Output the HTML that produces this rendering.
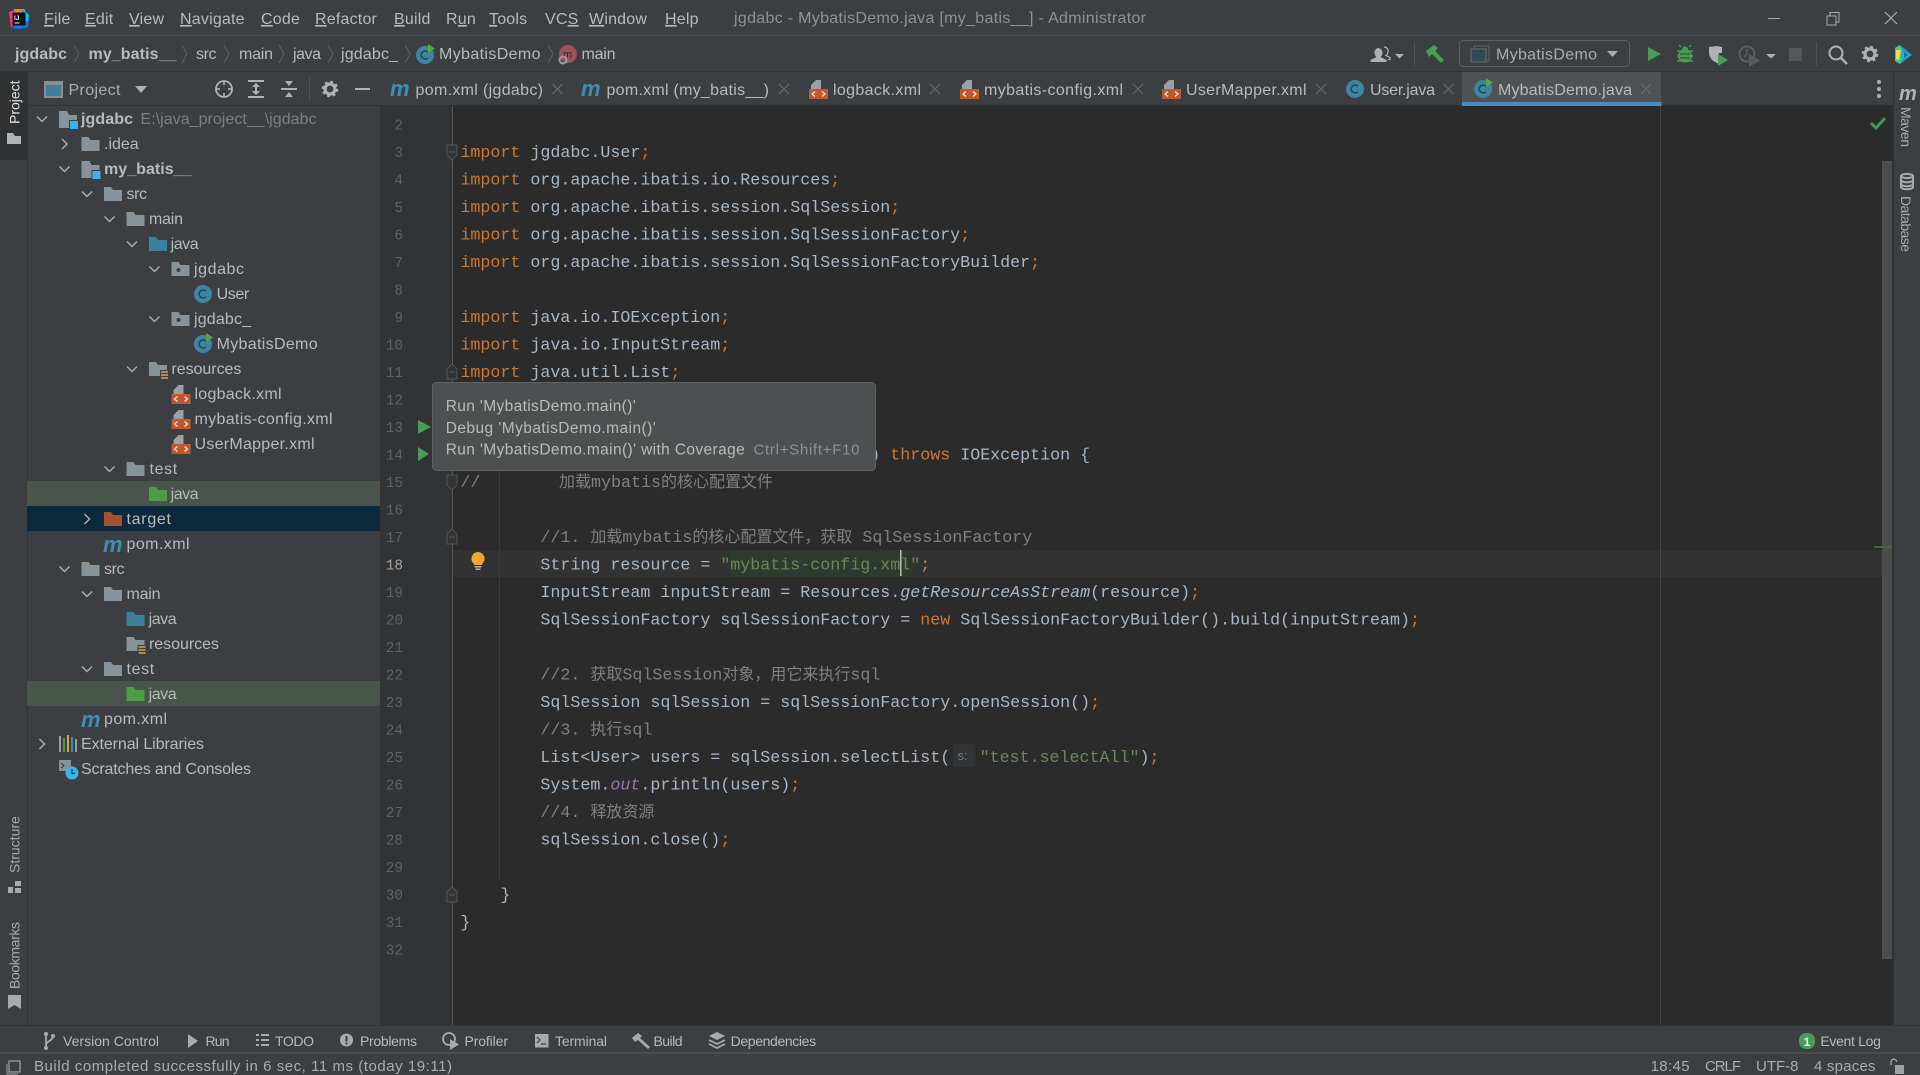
<!DOCTYPE html>
<html lang="en"><head><meta charset="utf-8"><title>jgdabc - MybatisDemo.java</title>
<style>
html,body{margin:0;padding:0;background:#3c3f41;width:1920px;height:1075px;overflow:hidden}
svg{display:block}
text{font-family:"Liberation Sans","Noto Sans CJK SC",sans-serif;white-space:pre}
.ui{font-size:16px;fill:#b8babc}
.b{font-weight:700;fill:#b8babc}
.m{font-size:16px;fill:#b8babc;letter-spacing:.2px}
.t{font-size:16px;fill:#b8babc}
.sm{font-size:14px;fill:#b8babc}
.st{font-size:15px;fill:#a9adb0}
.v{font-size:14px;fill:#a8acae}
.code text,text.code{font-family:"Liberation Mono","Noto Sans CJK SC",monospace;font-size:16.67px;fill:#a9b7c6}
.ln text{font-family:"Liberation Mono",monospace;font-size:14.4px;fill:#606366;text-anchor:end}
.k{fill:#cc7832}
.s{fill:#6a8759}
.c{fill:#808080}
.cj{font-family:"Noto Sans CJK SC",sans-serif;font-size:16px}
.i{font-style:italic}
.p{fill:#9876aa}
</style></head><body>
<svg xmlns="http://www.w3.org/2000/svg" width="1920" height="1075" viewBox="0 0 1920 1075">
<defs>
<path id="f" d="M0 0H7L9 3H18V14H0Z"/>
<g id="mod"><path d="M0 0H8L10 4H18V17H0Z" fill="#87939a"/><rect x="10" y="9" width="10" height="10" fill="#3c3f41"/><rect x="11" y="10" width="8" height="8" fill="#3bb5e8"/></g>
<g id="pkg"><path d="M0 0H7L9 3H18V14H0Z" fill="#87939a"/><circle cx="7" cy="8" r="2" fill="#3c3f41"/></g>
<g id="res"><path d="M0 0H7L9 3H18V14H0Z" fill="#87939a"/><rect x="11" y="8" width="9" height="10" fill="#3c3f41"/><path d="M12 10h7M12 13h7M12 16h7" stroke="#d9a343" stroke-width="1.6"/></g>
<g id="cls"><circle cx="9" cy="9" r="9" fill="#3f85a3"/><path d="M12 6.2A4 4 0 1 0 12 11.8" fill="none" stroke="#24475a" stroke-width="1.6"/></g>
<g id="clsr"><use href="#cls"/><path d="M12 -2L19 2.5L12 7Z" fill="#5aa63f"/></g>
<g id="xml"><path d="M7 0H12V9H2V5Z" fill="#9aa0a4"/><rect x="0" y="9" width="19" height="10" fill="#c0582b"/><path d="M6 11.5L3 14L6 16.5M13 11.5L16 14L13 16.5" fill="none" stroke="#eee" stroke-width="1.2"/></g>
<path id="ad" d="M-5 -2.5L0 2.5L5 -2.5" fill="none" stroke="#a8abae" stroke-width="1.5"/>
<path id="ar" d="M-2.5 -5L2.5 0L-2.5 5" fill="none" stroke="#a8abae" stroke-width="1.5"/>
<path id="x" d="M-5 -5L5 5M5 -5L-5 5" fill="none" stroke="#696c6e" stroke-width="1.2"/>
<path id="ch" d="M0 0L5 9L0 18" fill="none" stroke="#606366" stroke-width="1"/>
<g id="gear"><circle r="5" fill="none" stroke="#afb1b3" stroke-width="3.2"/><circle r="7" fill="none" stroke="#afb1b3" stroke-width="2.6" stroke-dasharray="2.7 2.8"/></g>
<path id="fo" d="M-5 -7H5V3L0 8L-5 3Z" fill="#313335" stroke="#555759" stroke-width="1"/>
<path id="fc" d="M-5 7H5V-3L0 -8L-5 -3Z" fill="#313335" stroke="#555759" stroke-width="1"/>
<text id="mi" font-size="22" font-weight="700" font-style="italic">m</text>
</defs>

<rect width="1920" height="1075" fill="#3c3f41"/>
<!-- editor -->
<rect x="380" y="106" width="72" height="919" fill="#313335"/>
<rect x="452" y="106" width="1442" height="919" fill="#2b2b2b"/>
<rect x="452" y="550" width="1430" height="27" fill="#323232"/>
<rect x="730" y="550" width="179" height="27" fill="#2e3a2e"/>
<rect x="452" y="106" width="1" height="919" fill="#555759"/>
<rect x="499" y="470" width="1" height="410" fill="#3b3b3b"/>
<rect x="1660" y="106" width="1" height="919" fill="#454545"/>
<rect x="1882" y="161" width="10" height="798" fill="#4c4c4c"/>
<rect x="1874" y="546" width="18" height="2" fill="#3f6b43"/>
<path d="M1871 123L1876 128L1885 118" fill="none" stroke="#3f9a4d" stroke-width="3"/>

<!-- chrome lines -->
<rect y="35" width="1920" height="1" fill="#515457"/>
<rect y="71" width="1920" height="1" fill="#323232"/>
<rect y="105" width="1894" height="1" fill="#323232"/>
<rect x="27" y="72" width="1" height="953" fill="#323232"/>
<rect x="380" y="106" width="1" height="919" fill="#323232"/>
<rect x="1893" y="72" width="1" height="953" fill="#323232"/>
<rect y="1025" width="1920" height="1" fill="#323232"/>
<rect y="1052" width="1920" height="2" fill="#4b4d4f"/>

<!-- title bar -->
<g>
<polygon points="9,12 18,9 20,18 11,28" fill="#ff318c"/>
<polygon points="14,9 25,9 24,16 16,16" fill="#fc801d"/>
<polygon points="22,10 29,15 28,27 20,29 12,28 22,20" fill="#087cfa"/>
<polygon points="24,10 29,15 28,22 22,18" fill="#07c3f2"/>
<rect x="12.500" y="12.500" width="13" height="13" fill="#111"/>
<text x="14" y="20" font-size="6.500" font-weight="700" fill="#eee">IJ</text>
<rect x="14.500" y="22.500" width="5" height="1" fill="#eee"/>
</g>
<g class="m">
<text class="m" x="44" y="24"><tspan text-decoration="underline">F</tspan>ile</text>
<text class="m" x="85" y="24"><tspan text-decoration="underline">E</tspan>dit</text>
<text class="m" x="129" y="24"><tspan text-decoration="underline">V</tspan>iew</text>
<text class="m" x="180" y="24"><tspan text-decoration="underline">N</tspan>avigate</text>
<text class="m" x="261" y="24"><tspan text-decoration="underline">C</tspan>ode</text>
<text class="m" x="315" y="24"><tspan text-decoration="underline">R</tspan>efactor</text>
<text class="m" x="394" y="24"><tspan text-decoration="underline">B</tspan>uild</text>
<text class="m" x="446" y="24">R<tspan text-decoration="underline">u</tspan>n</text>
<text class="m" x="489" y="24"><tspan text-decoration="underline">T</tspan>ools</text>
<text class="m" x="545" y="24">VC<tspan text-decoration="underline">S</tspan></text>
<text class="m" x="589" y="24"><tspan text-decoration="underline">W</tspan>indow</text>
<text class="m" x="665" y="24"><tspan text-decoration="underline">H</tspan>elp</text>
</g>
<text x="734" y="23" font-size="16" fill="#8f9294" textLength="412">jgdabc - MybatisDemo.java [my_batis__] - Administrator</text>
<rect x="1768" y="18" width="12" height="1" fill="#a8abae"/>
<rect x="1827" y="16" width="9" height="9" fill="none" stroke="#a8abae"/><path d="M1830 16V12.500H1839V22H1836" fill="none" stroke="#a8abae"/>
<path d="M1885 12L1897 24M1897 12L1885 24" stroke="#b0b3b5" stroke-width="1.100" fill="none"/>

<!-- nav bar -->
<text class="ui b" x="15" y="59" textLength="52">jgdabc</text><use href="#ch" x="74" y="45"/>
<text class="ui b" x="88.500" y="59" textLength="88">my_batis__</text><use href="#ch" x="182" y="45"/>
<text class="ui" x="196" y="59" textLength="20.500">src</text><use href="#ch" x="224" y="45"/>
<text class="ui" x="239" y="59" textLength="34">main</text><use href="#ch" x="279" y="45"/>
<text class="ui" x="293" y="59" textLength="28">java</text><use href="#ch" x="328" y="45"/>
<text class="ui" x="341" y="59" textLength="57">jgdabc_</text><use href="#ch" x="405" y="45"/>
<use href="#clsr" x="416" y="46"/>
<text class="ui" x="439" y="59" textLength="101.500">MybatisDemo</text><use href="#ch" x="548" y="45"/>
<circle cx="568" cy="54" r="9" fill="#a0505a"/><text x="563" y="58" font-size="11" fill="#2b2b2b">m</text>
<circle cx="563" cy="60" r="3.500" fill="none" stroke="#9aa0a4" stroke-width="2"/>
<text class="ui" x="581.500" y="59" textLength="34">main</text>

<!-- toolbar right -->
<path d="M1378 48a4.500 4.500 0 0 1 4.500 4.500c0 2-.8 3.500-2 4.500l6 3v2h-16v-2l6-3c-1.200-1-2-2.500-2-4.500A4.500 4.500 0 0 1 1378 48z" fill="#afb1b3"/>
<path d="M1384 47a4 4 0 0 1 4 5c-.2 1.500-.8 3-2 3.500l4 2v2h-2" fill="none" stroke="#afb1b3" stroke-width="1.200"/>
<path d="M1395 54H1404L1399.500 58.500Z" fill="#afb1b3"/>
<rect x="1414" y="42" width="1" height="24" fill="#505254"/>
<path d="M1426 51L1434 45L1438 48L1435 51L1444 60L1441 63L1432 54L1429 57Z" fill="#499c54"/>
<rect x="1459.500" y="40.500" width="170" height="26" rx="4" fill="none" stroke="#5e6060"/>
<rect x="1474" y="46" width="15" height="15" fill="none" stroke="#5f6365"/><rect x="1471" y="49" width="15" height="13" fill="#2f4a56" stroke="#6a6e70"/>
<text class="ui" x="1496" y="59.500" textLength="101" style="fill:#a9adb0">MybatisDemo</text>
<path d="M1607 51H1618L1612.500 57Z" fill="#a8abae"/>
<path d="M1648 47L1661 54L1648 61Z" fill="#499c54"/>
<g fill="#499c54"><ellipse cx="1685" cy="56" rx="7" ry="6.500"/><circle cx="1685" cy="49.500" r="3"/><path d="M1677 51H1693M1677 56H1693M1677 61H1693M1681 47L1679 45M1689 47L1691 45" stroke="#499c54" stroke-width="1.500"/><path d="M1680 54H1690M1680 58H1690" stroke="#2f5d38" stroke-width="1.300"/></g>
<path d="M1709 47L1717 46L1722 47V53H1719V64L1715 62C1711 60 1709 56 1709 52Z" fill="#afb1b3"/><path d="M1718 54L1728 60L1718 66Z" fill="#499c54"/>
<circle cx="1747" cy="54" r="7.500" fill="none" stroke="#5f6163" stroke-width="1.800"/><path d="M1747 49V54L1744 57" stroke="#5f6163" stroke-width="1.300" fill="none"/><path d="M1749 54L1760 60.500L1749 67Z" fill="#585a5c"/>
<path d="M1766 54H1776L1771 58.500Z" fill="#afb1b3"/>
<rect x="1789" y="48" width="13" height="13" fill="#555759"/>
<rect x="1816" y="42" width="1" height="24" fill="#505254"/>
<circle cx="1836" cy="53" r="6.500" fill="none" stroke="#afb1b3" stroke-width="2"/><path d="M1841 58L1847 64" stroke="#afb1b3" stroke-width="2.400"/>
<use href="#gear" x="1870" y="54"/>
<path d="M1895 48L1900 45L1912 55L1900 64L1895 61Z" fill="#1c9ad6"/><path d="M1895 48L1900 45L1904 54L1900 64L1895 61Z" fill="#3fd07c"/><path d="M1896 50L1901 50L1899 60L1896 59Z" fill="#f1e05a"/><path d="M1901 50L1911 55L1901 60Z" fill="#29b3c9"/><path d="M1904 52L1908 55L1904 58Z" fill="#146e8c"/>

<!-- left strip -->
<rect x="0" y="72" width="27" height="88" fill="#2f3133"/>
<text class="v" transform="rotate(-90 19.500 124)" x="19.500" y="124" style="fill:#e0e0e0">Project</text>
<path d="M7 133H13L15 136H21V144H7Z" fill="#b0b3b5"/>
<text class="v" transform="rotate(-90 19.500 873)" x="19.500" y="873">Structure</text>
<path d="M8 887H13V893H8ZM15 881H21V886H15ZM15 888H21V893H15Z" fill="#a8abae"/>
<text class="v" transform="rotate(-90 19.500 989)" x="19.500" y="989" textLength="67">Bookmarks</text>
<path d="M8 995H21V1009L14.500 1005L8 1009Z" fill="#a8abae"/>

<!-- right strip -->
<text x="1899" y="100" font-size="20" font-weight="700" font-style="italic" fill="#afb1b3">m</text>
<text class="v" transform="rotate(90 1901 107)" x="1901" y="107" textLength="40">Maven</text>
<g fill="none" stroke="#a8abae" stroke-width="2"><ellipse cx="1907" cy="176" rx="6" ry="2"/><path d="M1901 180c0 3 12 3 12 0M1901 184c0 3 12 3 12 0M1901 176V187c0 3 12 3 12 0V176"/></g>
<text class="v" transform="rotate(90 1901 196)" x="1901" y="196" textLength="56">Database</text>

<!-- project header -->
<rect x="45" y="82" width="17" height="15" fill="#3f7f9c" stroke="#8a8e90" stroke-width="2"/><rect x="44" y="81" width="19" height="4" fill="#8a8e90"/>
<text class="ui" x="68.500" y="95" textLength="52" style="fill:#a9adb0">Project</text>
<path d="M135 86H147L141 93Z" fill="#afb1b3"/>
<g fill="none" stroke="#afb1b3" stroke-width="1.800"><circle cx="224" cy="89" r="8"/><path d="M224 81V85M224 93V97M216 89H220M228 89H232"/></g>
<path d="M248 81H264M248 97H264M256 84V94" stroke="#afb1b3" stroke-width="2" fill="none"/><path d="M252 87L256 83L260 87ZM252 91L256 95L260 91Z" fill="#afb1b3"/>
<path d="M281 89H297" stroke="#afb1b3" stroke-width="2" fill="none"/><path d="M285 81L289 86L293 81ZM285 97L289 92L293 97Z" fill="#afb1b3"/>
<rect x="309" y="77" width="1" height="24" fill="#505254"/>
<use href="#gear" x="330" y="89"/>
<rect x="355" y="88" width="15" height="2" fill="#afb1b3"/>

<!-- tabs -->
<rect x="1462" y="72" width="199" height="33" fill="#4e5254"/>
<rect x="1462" y="102" width="199.500" height="4" fill="#4a88c7"/>
<use href="#mi" x="390" y="96" fill="#3f8fb5"/>
<text class="t" x="415.500" y="95" textLength="127.500">pom.xml (jgdabc)</text><use href="#x" x="557.500" y="89"/>
<use href="#mi" x="581" y="96" fill="#3f8fb5"/>
<text class="t" x="606.500" y="95" textLength="162.500">pom.xml (my_batis__)</text><use href="#x" x="784" y="89"/>
<use href="#xml" x="809" y="80"/>
<text class="t" x="833" y="95" textLength="88">logback.xml</text><use href="#x" x="935" y="89"/>
<use href="#xml" x="960" y="80"/>
<text class="t" x="984" y="95" textLength="139">mybatis-config.xml</text><use href="#x" x="1138" y="89"/>
<use href="#xml" x="1162" y="80"/>
<text class="t" x="1186" y="95" textLength="120.500">UserMapper.xml</text><use href="#x" x="1321" y="89"/>
<use href="#cls" x="1346" y="80"/>
<text class="t" x="1370" y="95" textLength="65">User.java</text><use href="#x" x="1448.500" y="89"/>
<use href="#clsr" x="1474" y="80"/>
<text class="t" x="1498" y="95" textLength="134">MybatisDemo.java</text><use href="#x" x="1646" y="89"/>
<circle cx="1879" cy="82" r="2" fill="#afb1b3"/><circle cx="1879" cy="89" r="2" fill="#afb1b3"/><circle cx="1879" cy="96" r="2" fill="#afb1b3"/>

<!-- tree -->
<rect x="27" y="481" width="353" height="25" fill="#49544a"/>
<rect x="27" y="506" width="353" height="25" fill="#0d293e"/>
<rect x="27" y="681" width="353" height="25" fill="#49544a"/>

<use href="#ad" x="42" y="119"/><use href="#mod" x="59" y="111"/><text class="ui b" x="81" y="124" textLength="52">jgdabc</text><text class="ui" x="140.500" y="124" textLength="176" style="fill:#7c7f82">E:\java_project__\jgdabc</text>
<use href="#ar" x="64.500" y="144"/><use href="#f" x="81.500" y="137" fill="#87939a"/><text class="ui" x="104" y="149" textLength="34.700">.idea</text>
<use href="#ad" x="64.500" y="169"/><use href="#mod" x="81.500" y="161"/><text class="ui b" x="104" y="174" textLength="87.500">my_batis__</text>
<use href="#ad" x="87" y="194"/><use href="#f" x="104" y="187" fill="#87939a"/><text class="ui" x="126.500" y="199" textLength="20.500">src</text>
<use href="#ad" x="109.500" y="219"/><use href="#f" x="126.500" y="212" fill="#87939a"/><text class="ui" x="149" y="224" textLength="34">main</text>
<use href="#ad" x="132" y="244"/><use href="#f" x="149" y="237" fill="#3c80a0"/><text class="ui" x="170.600" y="249" textLength="28">java</text>
<use href="#ad" x="154.500" y="269"/><use href="#pkg" x="171.500" y="262"/><text class="ui" x="194" y="274" textLength="50">jgdabc</text>
<use href="#cls" x="194" y="285"/><text class="ui" x="216.600" y="299" textLength="32.600">User</text>
<use href="#ad" x="154.500" y="319"/><use href="#pkg" x="171.500" y="312"/><text class="ui" x="194" y="324" textLength="57">jgdabc_</text>
<use href="#clsr" x="194" y="335"/><text class="ui" x="216.600" y="349" textLength="101">MybatisDemo</text>
<use href="#ad" x="132" y="369"/><use href="#res" x="149" y="362"/><text class="ui" x="171.400" y="374" textLength="70">resources</text>
<use href="#xml" x="171.500" y="385"/><text class="ui" x="194.500" y="399" textLength="87">logback.xml</text>
<use href="#xml" x="171.500" y="410"/><text class="ui" x="194.500" y="424" textLength="138">mybatis-config.xml</text>
<use href="#xml" x="171.500" y="435"/><text class="ui" x="194.500" y="449" textLength="120">UserMapper.xml</text>
<use href="#ad" x="109.500" y="469"/><use href="#f" x="126.500" y="462" fill="#87939a"/><text class="ui" x="149.500" y="474" textLength="27.700">test</text>
<use href="#f" x="149" y="487" fill="#4f9a45"/><text class="ui" x="170.600" y="499" textLength="28">java</text>
<use href="#ar" x="87" y="519"/><use href="#f" x="104" y="512" fill="#a4512e"/><text class="ui" x="126.500" y="524" textLength="44.500">target</text>
<use href="#mi" x="103" y="552" fill="#3f8fb5"/><text class="ui" x="126.500" y="549" textLength="63">pom.xml</text>
<use href="#ad" x="64.500" y="569"/><use href="#f" x="81.500" y="562" fill="#87939a"/><text class="ui" x="104" y="574" textLength="20.500">src</text>
<use href="#ad" x="87" y="594"/><use href="#f" x="104" y="587" fill="#87939a"/><text class="ui" x="126.500" y="599" textLength="34">main</text>
<use href="#f" x="126.500" y="612" fill="#3c80a0"/><text class="ui" x="148.600" y="624" textLength="28">java</text>
<use href="#res" x="126.500" y="637"/><text class="ui" x="149" y="649" textLength="70">resources</text>
<use href="#ad" x="87" y="669"/><use href="#f" x="104" y="662" fill="#87939a"/><text class="ui" x="126.500" y="674" textLength="27.700">test</text>
<use href="#f" x="126.500" y="687" fill="#4f9a45"/><text class="ui" x="148.600" y="699" textLength="28">java</text>
<use href="#mi" x="81" y="727" fill="#3f8fb5"/><text class="ui" x="104" y="724" textLength="63">pom.xml</text>
<use href="#ar" x="42" y="744"/>
<rect x="59" y="736" width="2" height="16" fill="#9aa0a4"/><rect x="63" y="738" width="2" height="14" fill="#4f9a45"/><rect x="67" y="735" width="2" height="17" fill="#d9a343"/><rect x="71" y="737" width="2" height="15" fill="#3f8fb5"/><rect x="75" y="739" width="2" height="13" fill="#9aa0a4"/>
<text class="ui" x="81" y="749" textLength="123">External Libraries</text>
<rect x="59" y="760" width="12" height="11" fill="#87939a"/><path d="M61 763L64 765.500L61 768" fill="none" stroke="#333" stroke-width="1"/><circle cx="72" cy="773" r="6.500" fill="#3bb5e8"/><path d="M72 769V773.500H75" fill="none" stroke="#1e3e50" stroke-width="1.300"/>
<text class="ui" x="81" y="774" textLength="170">Scratches and Consoles</text>

<!-- line numbers -->
<g class="ln">
<text x="403" y="129.500">2</text><text x="403" y="157">3</text><text x="403" y="184.500">4</text><text x="403" y="212">5</text><text x="403" y="239.500">6</text><text x="403" y="267">7</text><text x="403" y="294.500">8</text><text x="403" y="322">9</text><text x="403" y="349.500">10</text><text x="403" y="377">11</text><text x="403" y="404.500">12</text><text x="403" y="432">13</text><text x="403" y="459.500">14</text><text x="403" y="487">15</text><text x="403" y="514.500">16</text><text x="403" y="542">17</text><text x="403" y="569.500" style="fill:#a4a3a3">18</text><text x="403" y="597">19</text><text x="403" y="624.500">20</text><text x="403" y="652">21</text><text x="403" y="679.500">22</text><text x="403" y="707">23</text><text x="403" y="734.500">24</text><text x="403" y="762">25</text><text x="403" y="789.500">26</text><text x="403" y="817">27</text><text x="403" y="844.500">28</text><text x="403" y="872">29</text><text x="403" y="899.500">30</text><text x="403" y="927">31</text><text x="403" y="954.500">32</text>
</g>
<!-- gutter icons -->
<use href="#fo" x="452" y="152"/><use href="#fc" x="452" y="372"/><use href="#fo" x="452" y="482"/><use href="#fc" x="452" y="537"/><use href="#fc" x="452" y="895"/>
<path d="M449 152H455M449 372H455M449 537H455M449 895H455" stroke="#5b5d5f" stroke-width="1"/>
<path d="M418 447L429 454L418 461Z" fill="#499c54"/>
<path d="M478 552a6.700 6.700 0 0 1 4 12v1h-8v-1a6.700 6.700 0 0 1 4-12z" fill="#f0a732"/><rect x="474.500" y="566" width="7" height="1.500" fill="#b0b3b5"/><rect x="475.500" y="568.500" width="5" height="1.500" fill="#b0b3b5"/>

<!-- code -->
<g class="code">
<text x="460.400" y="157"><tspan class="k">import</tspan> jgdabc.User<tspan class="k">;</tspan></text>
<text x="460.400" y="184.500"><tspan class="k">import</tspan> org.apache.ibatis.io.Resources<tspan class="k">;</tspan></text>
<text x="460.400" y="212"><tspan class="k">import</tspan> org.apache.ibatis.session.SqlSession<tspan class="k">;</tspan></text>
<text x="460.400" y="239.500"><tspan class="k">import</tspan> org.apache.ibatis.session.SqlSessionFactory<tspan class="k">;</tspan></text>
<text x="460.400" y="267"><tspan class="k">import</tspan> org.apache.ibatis.session.SqlSessionFactoryBuilder<tspan class="k">;</tspan></text>
<text x="460.400" y="322"><tspan class="k">import</tspan> java.io.IOException<tspan class="k">;</tspan></text>
<text x="460.400" y="349.500"><tspan class="k">import</tspan> java.io.InputStream<tspan class="k">;</tspan></text>
<text x="460.400" y="377"><tspan class="k">import</tspan> java.util.List<tspan class="k">;</tspan></text>
<text x="460.400" y="432"><tspan class="k">public class</tspan> MybatisDemo {</text>
<text x="500.400" y="459.500"><tspan class="k">public static void</tspan> main(String[] args) <tspan class="k">throws</tspan> IOException {</text>
<text x="460.400" y="487" class="c" style="fill:#808080">//</text>
<text x="559" y="487" style="fill:#808080"><tspan class="cj">加载</tspan>mybatis<tspan class="cj">的核心配置文件</tspan></text>
<text x="540.400" y="542" style="fill:#808080">//1. <tspan class="cj">加载</tspan>mybatis<tspan class="cj">的核心配置文件，获取</tspan> SqlSessionFactory</text>
<text x="540.400" y="569.500">String resource = <tspan class="s">"mybatis-config.xml"</tspan><tspan class="k">;</tspan></text>
<text x="540.400" y="597">InputStream inputStream = Resources.<tspan class="i">getResourceAsStream</tspan>(resource)<tspan class="k">;</tspan></text>
<text x="540.400" y="624.500">SqlSessionFactory sqlSessionFactory = <tspan class="k">new</tspan> SqlSessionFactoryBuilder().build(inputStream)<tspan class="k">;</tspan></text>
<text x="540.400" y="679.500" style="fill:#808080">//2. <tspan class="cj">获取</tspan>SqlSession<tspan class="cj">对象，用它来执行</tspan>sql</text>
<text x="540.400" y="707">SqlSession sqlSession = sqlSessionFactory.openSession()<tspan class="k">;</tspan></text>
<text x="540.400" y="734.500" style="fill:#808080">//3. <tspan class="cj">执行</tspan>sql</text>
<text x="540.400" y="762">List&lt;User&gt; users = sqlSession.selectList(</text>
<text x="979.600" y="762"><tspan class="s">"test.selectAll"</tspan>)<tspan class="k">;</tspan></text>
<text x="540.400" y="789.500">System.<tspan class="i p">out</tspan>.println(users)<tspan class="k">;</tspan></text>
<text x="540.400" y="817" style="fill:#808080">//4. <tspan class="cj">释放资源</tspan></text>
<text x="540.400" y="844.500">sqlSession.close()<tspan class="k">;</tspan></text>
<text x="500.400" y="899.500">}</text>
<text x="460.400" y="927">}</text>
</g>
<rect x="953" y="744" width="22.500" height="23" rx="3" fill="#313335"/>
<text x="957.500" y="760" font-size="13" fill="#787878">s:</text>
<rect x="900" y="550" width="1.500" height="26" fill="#bbb"/>

<!-- tooltip -->
<rect x="432.500" y="382.500" width="443" height="88" rx="4" fill="#4d5051" stroke="#606263"/>
<text x="445.700" y="411" font-size="15.500" fill="#bbb" textLength="190">Run 'MybatisDemo.main()'</text>
<text x="445.700" y="433" font-size="15.500" fill="#bbb" textLength="210">Debug 'MybatisDemo.main()'</text>
<text x="445.700" y="454.500" font-size="15.500" fill="#bbb" textLength="299">Run 'MybatisDemo.main()' with Coverage</text>
<text x="753.500" y="454.500" font-size="15" fill="#8f9294" textLength="106">Ctrl+Shift+F10</text>
<path d="M418 420L431 427L418 434Z" fill="#499c54"/>

<!-- bottom toolbar -->
<g fill="#a8abae" stroke="none">
<circle cx="46" cy="1034" r="2"/><circle cx="46" cy="1048" r="2"/><circle cx="53" cy="1036" r="2"/><path d="M46 1034V1048M53 1036C53 1041 46 1041 46 1045" stroke="#a8abae" stroke-width="1.800" fill="none"/>
<path d="M188 1034L198 1041L188 1048Z"/>
<path d="M256 1034h3v2h-3zM256 1039h3v2h-3zM256 1044h3v2h-3zM261 1034h8v2h-8zM261 1039h8v2h-8zM261 1044h8v2h-8z"/>
<circle cx="346.500" cy="1040" r="6.500"/><rect x="345.500" y="1036" width="2" height="5.500" fill="#3c3f41"/><rect x="345.500" y="1042.500" width="2" height="2" fill="#3c3f41"/>
<circle cx="449" cy="1039" r="6" fill="none" stroke="#a8abae" stroke-width="1.800"/><path d="M450 1039L459 1044.500L450 1050Z"/>
<rect x="535" y="1034" width="13.500" height="13.500"/><path d="M537 1037L540 1040L537 1043M541 1044H546" stroke="#3c3f41" stroke-width="1.200" fill="none"/>
<path d="M632 1038L638 1033L642 1036L640 1038L650 1047L648 1049L638 1040L635 1042Z"/>
<path d="M709 1036L717 1032L725 1036L717 1040Z"/><path d="M709 1040L717 1044L725 1040M709 1044L717 1048L725 1044" stroke="#a8abae" stroke-width="1.800" fill="none"/>
<rect x="1799" y="1033" width="16" height="16" rx="7" fill="#499c54"/>
</g>
<text x="1807" y="1046" font-size="12" font-weight="700" fill="#eee" text-anchor="middle">1</text>
<text class="sm" x="63" y="1046" textLength="96">Version Control</text>
<text class="sm" x="205.500" y="1046" textLength="24">Run</text>
<text class="sm" x="275" y="1046" textLength="39">TODO</text>
<text class="sm" x="360" y="1046" textLength="57">Problems</text>
<text class="sm" x="464.500" y="1046" textLength="43.500">Profiler</text>
<text class="sm" x="555" y="1046" textLength="52">Terminal</text>
<text class="sm" x="653.500" y="1046" textLength="29">Build</text>
<text class="sm" x="730.600" y="1046" textLength="85.500">Dependencies</text>
<text class="sm" x="1820.400" y="1046" textLength="60.500">Event Log</text>

<!-- status bar -->
<rect x="9" y="1061" width="11" height="11" fill="none" stroke="#a0a3a6" stroke-width="1.200"/><path d="M7 1064V1074H18" fill="none" stroke="#a0a3a6" stroke-width="1"/>
<text class="st" x="34" y="1071" textLength="418">Build completed successfully in 6 sec, 11 ms (today 19:11)</text>
<text class="st" x="1650.600" y="1071" textLength="39">18:45</text>
<text class="st" x="1705" y="1071" textLength="36">CRLF</text>
<text class="st" x="1756" y="1071" textLength="42.500">UTF-8</text>
<text class="st" x="1814" y="1071" textLength="61.500">4 spaces</text>
<path d="M1891 1065V1062a2.800 2.800 0 0 1 5.600 0" fill="none" stroke="#a0a3a6" stroke-width="1.400"/><rect x="1895" y="1065" width="9" height="9" fill="#a0a3a6"/>
</svg>
</body></html>
